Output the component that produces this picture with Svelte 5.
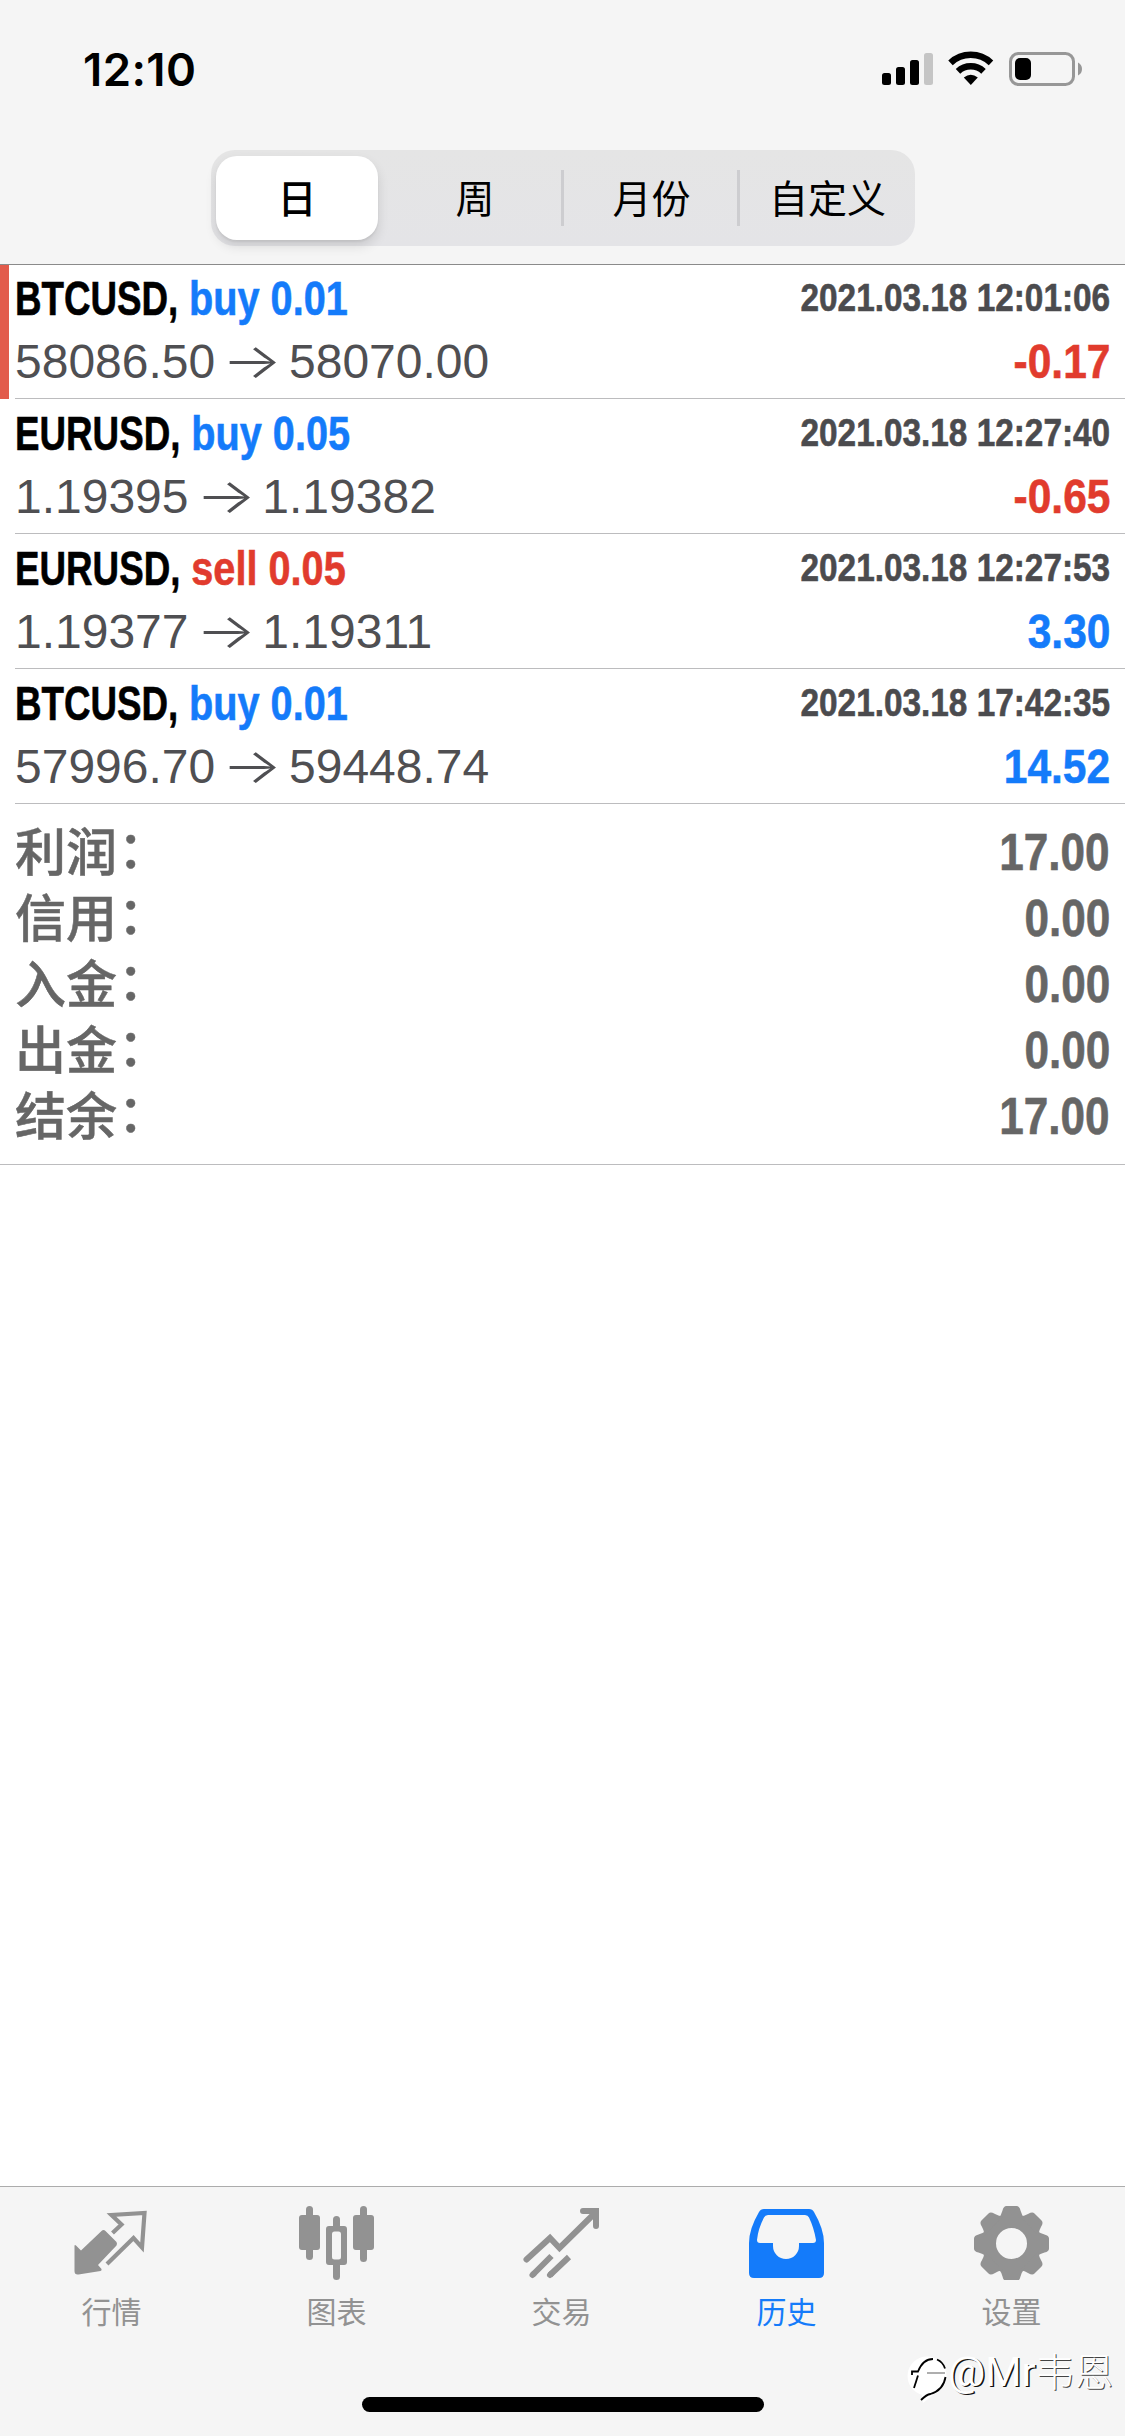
<script>
  const segments = ['日', '周', '月份', '自定义'];
  const deals = [
    { symbol: 'BTCUSD', side: 'buy', volume: '0.01', open: '58086.50', close: '58070.00', time: '2021.03.18 12:01:06', profit: '-0.17', marked: true },
    { symbol: 'EURUSD', side: 'buy', volume: '0.05', open: '1.19395', close: '1.19382', time: '2021.03.18 12:27:40', profit: '-0.65' },
    { symbol: 'EURUSD', side: 'sell', volume: '0.05', open: '1.19377', close: '1.19311', time: '2021.03.18 12:27:53', profit: '3.30' },
    { symbol: 'BTCUSD', side: 'buy', volume: '0.01', open: '57996.70', close: '59448.74', time: '2021.03.18 17:42:35', profit: '14.52' }
  ];
  const totals = [['利润', '17.00'], ['信用', '0.00'], ['入金', '0.00'], ['出金', '0.00'], ['结余', '17.00']];
  const tabs = [
    { id: 'quotes', label: '行情' },
    { id: 'chart', label: '图表' },
    { id: 'trade', label: '交易' },
    { id: 'history', label: '历史' },
    { id: 'settings', label: '设置' }
  ];
  const teeth = [0, 45, 90, 135, 180, 225, 270, 315];
</script>

<div class="screen">
  <header>
    <div class="status">
      <span class="clock">12:10</span>
      <svg class="indicators" width="202" height="38" viewBox="0 0 202 38">
        <rect x="2" y="23" width="9" height="12" rx="2.5" />
        <rect x="16" y="17" width="9" height="18" rx="2.5" />
        <rect x="30" y="10" width="9" height="25" rx="2.5" />
        <rect x="44" y="3" width="9" height="32" rx="2.5" fill="#c5c5c5" />
        <g fill="none" stroke="#000" stroke-width="6.5">
          <path d="M70.500 12.800a29.500 29.500 0 0 1 40.500 0" />
          <path d="M78 21.300a18.500 18.500 0 0 1 25.500 0" />
        </g>
        <path d="M83.800 27.500q7-5.500 14 0l-7 7.500z" />
        <rect x="130.500" y="3.500" width="63" height="31" rx="8" fill="none" stroke="#979797" stroke-width="3" />
        <rect x="135" y="8" width="16" height="22" rx="5" />
        <path d="M198 12.500q4 2 4 6.500t-4 6.500z" fill="#979797" />
      </svg>
    </div>
    <nav class="segmented">
      {#each segments as s, i}
        <div class="segment" class:active={i === 0} class:ruled={i > 1}><span>{s}</span></div>
      {/each}
    </nav>
  </header>

  <main>
    {#each deals as d}
      <article class:marked={d.marked}>
        <div class="deal">
          <div class="line">
            <span class="title">{d.symbol}, <span class="side {d.side}">{d.side} {d.volume}</span></span>
            <span class="time">{d.time}</span>
          </div>
          <div class="line second">
            <span class="price">{d.open}<span class="arrow">→</span>{d.close}</span>
            <span class="profit" class:loss={d.profit.startsWith('-')}>{d.profit}</span>
          </div>
        </div>
      </article>
    {/each}
    <section class="totals">
      {#each totals as [label, value]}
        <div class="total"><span class="label">{label}<span class="colon">：</span></span><span class="value">{value}</span></div>
      {/each}
    </section>
  </main>

  <footer>
    <nav class="tabs">
      {#each tabs as t}
        <div class="tab" class:current={t.id === 'history'}>
          <svg width="76" height="76" viewBox="0 0 76 76" fill="currentColor">
            {#if t.id === 'quotes'}
              <path d="M1.500 42q0-1.500 1.500-.5l5 5L28.500 27q2-2 4 0l11 11q1 1.500 0 3.500L25 61l3.500 4q.5 1.500-1 2L5.500 70.500q-4 .5-4-3.500z" />
              <path d="M39.500 29l9-8.500-10-9.500L71.500 9 69 43.500 60.500 34 34 60" fill="none" stroke="currentColor" stroke-width="4.200" />
            {:else if t.id === 'chart'}
              <rect x="1" y="11" width="21" height="35" rx="3" />
              <rect x="8" y="2" width="7" height="54" rx="3.500" />
              <rect x="55" y="11" width="21" height="35" rx="3" />
              <rect x="62" y="2" width="7" height="56" rx="3.500" />
              <path fill-rule="evenodd" d="M31 22h15q3 0 3 3v33q0 3-3 3H31q-3 0-3-3V25q0-3 3-3zm5.500 5.500q-2.500 0-2.500 2.500v23q0 2.500 2.500 2.500h4q2.500 0 2.500-2.500V30q0-2.500-2.500-2.500z" />
              <rect x="35" y="12" width="7" height="14" rx="3.500" />
              <rect x="35" y="57" width="7" height="19" rx="3.500" />
            {:else if t.id === 'trade'}
              <g fill="none" stroke="currentColor" stroke-width="6" stroke-linecap="round">
                <path d="M3.500 55.500L27 34l9.500 10L72 9" stroke-linejoin="miter" />
                <path d="M60 7h13v15" />
                <path d="M9.500 71l19-19M27 71l19-18" stroke-linecap="butt" />
                <path d="M9.500 71l1-1M27 71l1-1" />
              </g>
            {:else if t.id === 'history'}
              <path fill-rule="evenodd" d="M16 5h45q3.500 0 5 3Q76 25 76 39v30q0 5-5 5H6q-5 0-5-5V39Q1 25 11 8q1.500-3 5-3zm4 6q-3 0-4 2.500Q10 25 9 36q0 3 3 3h13v3a13 13 0 0 0 26 0v-3h14q3 0 3-3Q66 24 61 13.500 60 11 57 11z" />
            {:else}
              <g transform="translate(38.500 39.500)">
                <circle r="22" fill="none" stroke="currentColor" stroke-width="13" />
                {#each teeth as a}
                  <path transform="rotate({a})" d="M-13-25Q-10-29-9-33-8-37.500-5-37.500H5Q8-37.500 9-33 10-29 13-25z" />
                {/each}
              </g>
            {/if}
          </svg>
          <span>{t.label}</span>
        </div>
      {/each}
    </nav>
    <div class="home"></div>
    <div class="watermark">
      <svg width="42" height="50" viewBox="0 0 42 50">
        <circle cx="21" cy="21" r="19.500" fill="#fff" />
        <path d="M15 36l2 12 10-8z" fill="#fff" />
        <g fill="none" stroke="#000" stroke-width="1.800">
          <path d="M6 20v-3.500h6Q17 4 27 4" />
          <path d="M31 4.500q6 2.500 8 9" />
          <path d="M12 20.500L8 33" />
          <path d="M39.500 22q-2 13-15 17-4 .5-9.500 6" />
        </g>
        <path d="M21 18h18" stroke="#777" stroke-width="1.200" />
      </svg>
      <span>@Mr<i>韦恩</i></span>
    </div>
  </footer>
</div>

<style>
  :global(body) { background: #fff; }
  .screen {
    width: 1125px; height: 2436px; display: flex; flex-direction: column;
    background: #fff; color: #000; white-space: nowrap; overflow: hidden;
    font-family: "Liberation Sans", "Noto Sans CJK SC", sans-serif;
  }
  header {
    height: 264px; box-sizing: content-box; flex: none; background: #f5f5f5;
    border-bottom: 1px solid #8a8a8a; display: flex; flex-direction: column; align-items: center;
  }
  .status { width: 100%; height: 150px; box-sizing: border-box; padding: 44px 43px 0 83px; display: flex; justify-content: space-between; }
  .clock { font: 600 45.5px/52px Inter, sans-serif; letter-spacing: 0.4px; }
  .indicators { margin-top: 6px; }
  .segmented {
    width: 704px; height: 96px; margin-left: 1px; border-radius: 24px; display: grid; grid-template-columns: repeat(4, 1fr);
    background: linear-gradient(#e5e5e5, #e4e4e7);
  }
  .segment { display: flex; align-items: center; justify-content: center; font: 400 39px/50px "Noto Sans CJK SC", sans-serif; margin: 20px 0; }
  .segment span { margin-top: -4px; }
  .ruled { border-left: 3px solid #cdcdd0; margin-left: -2px; }
  .segment.active { margin: 6px 9px 6px 5px; background: #fff; border-radius: 21px; font-weight: 500; box-shadow: 0 6px 12px rgba(0, 0, 0, 0.12), 0 2px 2px rgba(0, 0, 0, 0.06); }

  main { flex: 1; }
  article { height: 135px; padding-left: 15px; }
  article:first-child { height: 134px; }
  .marked { border-left: 9px solid #e25b4c; padding-left: 6px; }
  .deal { height: 100%; box-sizing: border-box; padding: 5px 15px 0 0; border-bottom: 1px solid #bcbcbe; }
  .marked .deal { padding-top: 4px; }
  .line { display: flex; justify-content: space-between; align-items: center; height: 58px; }
  .second { height: 68px; }
  .title, .time, .profit, .value { font-weight: 700; -webkit-text-stroke: 0.6px currentColor; }
  .title { font-size: 49px; transform: scaleX(0.75); transform-origin: left; }
  .side { display: inline-block; margin-left: 1px; transform: scaleX(1.08); transform-origin: left; }
  .buy { color: #147bfa; }
  .sell { color: #e13b2d; }
  .time { font-size: 39px; color: #4b4b4e; transform: scaleX(0.855); transform-origin: right; }
  .price { font-size: 48px; color: #4f4f52; }
  .arrow { display: inline-block; font-family: Inter, sans-serif; font-weight: 300; line-height: 48px; margin: 0 14px; transform: scaleX(1.32); }
  .profit { font-size: 48px; color: #147bfa; transform: scaleX(0.885); transform-origin: right; }
  .loss { color: #e13b2d; }

  .totals { padding: 15px; height: 330px; border-bottom: 1px solid #bcbcbe; color: #666; }
  .total { height: 66px; display: flex; align-items: center; justify-content: space-between; font-size: 51px; }
  .label { font: 500 51px/60px "Noto Sans CJK SC", sans-serif; margin-top: -6px; -webkit-text-stroke: 0.5px currentColor; }
  .colon { display: inline-block; transform: translate(1px, -3px); }
  .value { transform: scaleX(0.865); transform-origin: right; }

  footer { height: 249px; flex: none; background: #f5f5f5; border-top: 1px solid #acacac; position: relative; }
  .tabs { display: grid; grid-template-columns: repeat(5, 1fr); margin: 0 1px 0 -1px; padding-top: 17px; color: #929292; }
  .tab { display: flex; flex-direction: column; align-items: center; }
  .tab svg { margin-left: -2px; }
  .tab span { font: 400 30px/44px "Noto Sans CJK SC", sans-serif; margin-top: 8px; }
  .current { color: #147bfa; }
  .home { position: absolute; left: 362px; bottom: 24px; width: 402px; height: 15px; border-radius: 8px; background: #000; }
  .watermark { position: absolute; left: 906px; top: 168px; display: flex; color: #fff; }
  .watermark span { font: 400 41.5px/50px Roboto, "Noto Sans CJK SC", sans-serif; margin-top: -11px; text-shadow: 1.5px 1px 0.5px #111; }
  .watermark i { font: 300 39px/50px "Noto Sans CJK SC", sans-serif; text-shadow: 1px 1px 0.5px #444; }
</style>
